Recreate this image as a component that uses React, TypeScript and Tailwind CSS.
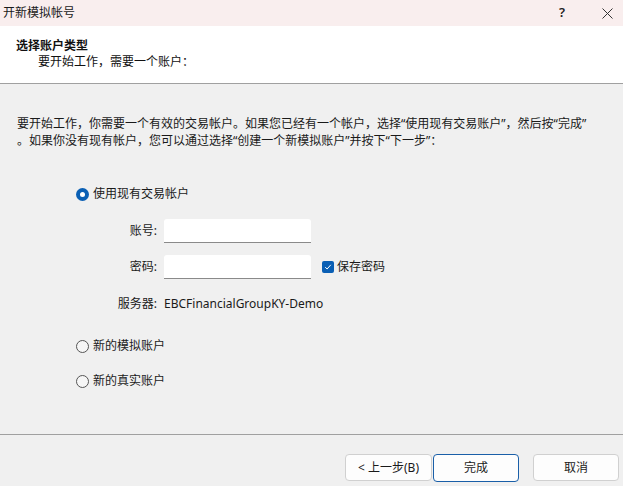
import React from "react";

const font = { fontFamily: '"Segoe UI", "Noto Sans", "Noto Sans CJK SC", sans-serif' };

function Radio({ checked, label }: { checked?: boolean; label: string }) {
  return (
    <div className="flex items-center gap-[4px]">
      {checked ? (
        <span className="w-[13px] h-[13px] rounded-full bg-[#0a5fb4] flex items-center justify-center">
          <span className="w-[5px] h-[5px] rounded-full bg-white" />
        </span>
      ) : (
        <span className="w-[13px] h-[13px] rounded-full border border-[#555] bg-[#f6f6f6]" />
      )}
      <span className="text-[12px] text-[#1a1a1a]">{label}</span>
    </div>
  );
}

export default function App() {
  return (
    <div className="w-[623px] h-[486px] bg-[#f0f0f0] flex flex-col overflow-hidden" style={font}>
      {/* title bar */}
      <div className="h-[26px] bg-[#f9eeee] flex items-center justify-between pl-[3px] pr-[10px] shrink-0">
        <span className="text-[12px] text-[#1a1a1a]">开新模拟帐号</span>
        <div className="flex items-center gap-[37px] text-[#222]">
          <span className="text-[13px] font-semibold">?</span>
          <svg width="11" height="11" viewBox="0 0 11 11" stroke="#333" strokeWidth="1">
            <path d="M0.5 0.5 L10.5 10.5 M10.5 0.5 L0.5 10.5" />
          </svg>
        </div>
      </div>
      {/* header */}
      <div className="h-[58px] bg-white border-b border-[#a0a0a0] pl-[16px] pt-[12px] shrink-0">
        <div className="text-[12px] font-bold text-[#111] leading-[16px]">选择账户类型</div>
        <div className="text-[12px] text-[#111] leading-[16px] pl-[22px]">要开始工作，需要一个账户：</div>
      </div>
      {/* body */}
      <div className="flex-1 pl-[17px] pr-[10px] pt-[31px]">
        <div className="text-[12px] text-[#1a1a1a] leading-[17px]">
          <div>要开始工作，你需要一个有效的交易帐户。如果您已经有一个帐户，选择“使用现有交易账户”，然后按“完成”</div>
          <div>。如果你没有现有帐户，您可以通过选择“创建一个新模拟账户”并按下“下一步”：</div>
        </div>
        <div className="pl-[59px] pt-[36px]">
          <Radio checked label="使用现有交易帐户" />
          <div className="pl-[40px] pt-[16px] flex flex-col gap-[12px]">
            <div className="flex items-center">
              <span className="w-[48px] text-right pr-[7px] text-[12px] text-[#1a1a1a]">账号:</span>
              <div className="w-[147px] h-[24px] bg-white border-b border-[#8a8a8a] rounded-t-[3px]" />
            </div>
            <div className="flex items-center">
              <span className="w-[48px] text-right pr-[7px] text-[12px] text-[#1a1a1a]">密码:</span>
              <div className="w-[147px] h-[24px] bg-white border-b border-[#8a8a8a] rounded-t-[3px]" />
              <div className="flex items-center ml-[11px] gap-[3px]">
                <span className="w-[12px] h-[12px] rounded-[2px] bg-[#0a5fb4] flex items-center justify-center">
                  <svg width="8" height="8" viewBox="0 0 8 8" fill="none" stroke="white" strokeWidth="1">
                    <path d="M1.2 4.2 L3.1 6 L6.8 1.8" />
                  </svg>
                </span>
                <span className="text-[12px] text-[#1a1a1a]">保存密码</span>
              </div>
            </div>
            <div className="flex items-center pt-[4px]">
              <span className="w-[48px] text-right pr-[7px] text-[12px] text-[#1a1a1a]">服务器:</span>
              <span className="text-[12px] text-[#1a1a1a]">EBCFinancialGroupKY-Demo</span>
            </div>
          </div>
          <div className="pt-[24px] flex flex-col gap-[17px]">
            <Radio label="新的模拟账户" />
            <Radio label="新的真实账户" />
          </div>
        </div>
      </div>
      {/* footer */}
      <div className="h-[52px] border-t border-[#a0a0a0] flex items-start pt-[19px] shrink-0">
        <div className="ml-[345px] flex gap-[1px]">
          <button className="w-[87px] h-[27px] bg-[#fdfdfd] border border-[#d0d0d0] rounded-[4px] text-[12px] text-[#1a1a1a]">&lt; 上一步(B)</button>
          <button className="w-[86px] h-[28px] bg-[#fdfdfd] border border-[#1a5fa8] rounded-[4px] text-[12px] text-[#1a1a1a]">完成</button>
        </div>
        <button className="ml-[14px] w-[86px] h-[27px] bg-[#fdfdfd] border border-[#d0d0d0] rounded-[4px] text-[12px] text-[#1a1a1a]">取消</button>
      </div>
    </div>
  );
}
